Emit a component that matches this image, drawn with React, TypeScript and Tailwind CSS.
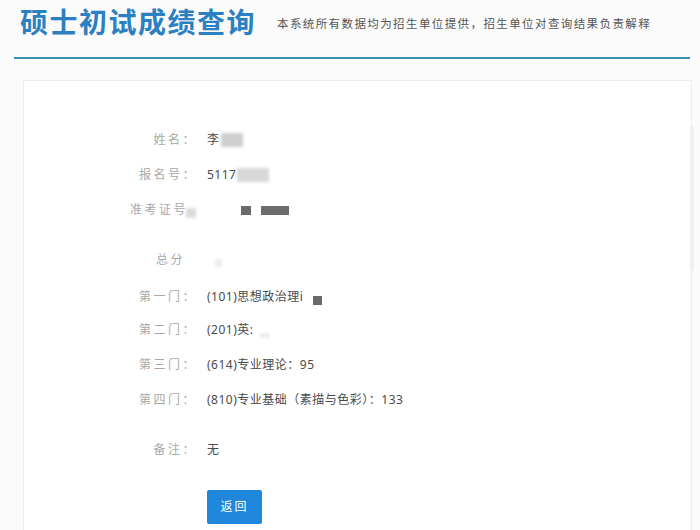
import React from "react";

const Blob = ({ w, h, c, blur = 1.5, ml = 0, mt = 0 }: { w: number; h: number; c: string; blur?: number; ml?: number; mt?: number }) => (
  <span
    className="inline-block align-middle"
    style={{ width: w, height: h, background: c, filter: `blur(${blur}px)`, marginLeft: ml, marginTop: mt }}
  />
);

function Row({ label, children, mt, labelPr = 0 }: { label: string; children?: React.ReactNode; mt: string; labelPr?: number }) {
  return (
    <div className={`flex h-[20px] items-center ${mt}`}>
      <div className="w-[173px] shrink-0 text-right text-[12px] tracking-[2.5px] text-[#a8a8a8]" style={{ paddingRight: labelPr }}>
        {label}
      </div>
      <div className="ml-[10px] flex items-center text-[12px] tracking-[0.5px] text-[#4a4a4a]">{children}</div>
    </div>
  );
}

export default function App() {
  return (
    <div
      className="h-[530px] w-[700px] overflow-hidden bg-[#fbfbfc]"
      style={{ fontFamily: '"Noto Sans", "Noto Sans CJK SC", sans-serif' }}
    >
      <div className="flex h-[44px] items-center pl-[20px]">
        <h1 className="text-[28px] font-bold leading-none tracking-[1.5px] text-[#2b80c2]">硕士初试成绩查询</h1>
        <span className="ml-[21px] mt-[4px] text-[11.5px] tracking-[1.4px] text-[#555]">
          本系统所有数据均为招生单位提供，招生单位对查询结果负责解释
        </span>
      </div>
      <div className="ml-[14px] mr-[10px] mt-[13px] h-[2px] bg-[#3d8fb6]" />
      <div className="relative ml-[23px] mr-[8px] mt-[21px] h-[460px] border border-[#ececef] bg-white pt-[49px]">
        <div className="absolute right-[-3px] top-[45px] h-[145px] w-[4px] bg-[#f1f1f3]" />
        <Row label="姓名：" mt="mt-0">
          <span>李</span>
          <Blob w={22} h={14} c="#cfcfcf" ml={1} />
        </Row>
        <Row label="报名号：" mt="mt-[15px]">
          <span>5117</span>
          <Blob w={32} h={14} c="#d8d8d8" ml={1} />
        </Row>
        <Row label="准考证号" mt="mt-[15px]" labelPr={9}>
          <Blob w={10} h={10} c="#dcdcdc" ml={-21} mt={6} />
          <Blob w={10} h={9} c="#6a6a6a" ml={45} blur={0.5} />
          <Blob w={28} h={9} c="#6c6c6c" ml={10} blur={0.5} />
        </Row>
        <Row label="总分" mt="mt-[30px]" labelPr={12}>
          <Blob w={7} h={8} c="#ececec" ml={8} mt={6} />
        </Row>
        <Row label="第一门：" mt="mt-[17px]">
          <span>(101)思想政治理i</span>
          <Blob w={9} h={9} c="#6a6a6a" ml={10} mt={6} blur={0.5} />
        </Row>
        <Row label="第二门：" mt="mt-[13px]">
          <span>(201)英:</span>
          <Blob w={10} h={5} c="#ebebeb" ml={6} mt={10} />
        </Row>
        <Row label="第三门：" mt="mt-[15px]">
          <span>(614)专业理论：95</span>
        </Row>
        <Row label="第四门：" mt="mt-[15px]">
          <span>(810)专业基础（素描与色彩）：133</span>
        </Row>
        <Row label="备注：" mt="mt-[30px]">
          <span>无</span>
        </Row>
        <div className="ml-[183px] mt-[30px] flex h-[34px] w-[55px] items-center justify-center rounded-[2px] bg-[#1f87dc] text-[12px] tracking-[2px] text-white">
          返回
        </div>
      </div>
    </div>
  );
}
